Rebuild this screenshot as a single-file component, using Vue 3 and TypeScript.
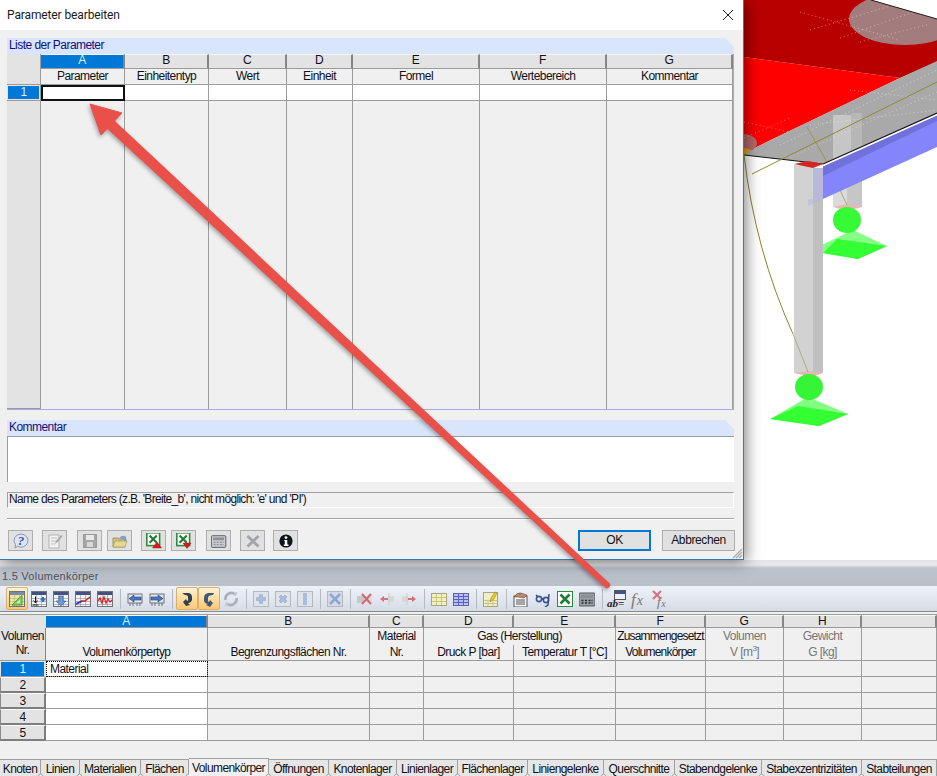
<script setup lang="ts">
// column letters and titles of the parameter dialog
const paramCols = [
  { key: 'A', title: 'Parameter' },
  { key: 'B', title: 'Einheitentyp' },
  { key: 'C', title: 'Wert' },
  { key: 'D', title: 'Einheit' },
  { key: 'E', title: 'Formel' },
  { key: 'F', title: 'Wertebereich' },
  { key: 'G', title: 'Kommentar' }
];

const volumeLetters = ['A', 'B', 'C', 'D', 'E', 'F', 'G', 'H', ''];
const volumeRows = [1, 2, 3, 4, 5];
const volumeCols = [0, 1, 2, 3, 4, 5, 6, 7, 8];

const tabs = [
  { label: 'Knoten', w: 41 },
  { label: 'Linien', w: 39 },
  { label: 'Materialien', w: 61 },
  { label: 'Flächen', w: 48 },
  { label: 'Volumenkörper', w: 80, active: true },
  { label: 'Öffnungen', w: 60 },
  { label: 'Knotenlager', w: 68 },
  { label: 'Linienlager', w: 61 },
  { label: 'Flächenlager', w: 70 },
  { label: 'Liniengelenke', w: 76 },
  { label: 'Querschnitte', w: 71 },
  { label: 'Stabendgelenke', w: 87 },
  { label: 'Stabexzentrizitäten', w: 100 },
  { label: 'Stabteilungen', w: 75 }
];

// small pieces the toolbar icons are made of
const sheet = (fill = '#f2f3f6', head = '#44527f', line = '#8b8f99') =>
  `<rect x="0.5" y="0.5" width="15" height="15" fill="${fill}" stroke="#6f7278"/>` +
  `<rect x="1" y="1" width="14" height="3" fill="${head}"/>` +
  `<path d="M1 7.5h14M1 10.5h14M1 13.5h14M5.5 4v11M10.5 4v11" stroke="${line}" stroke-width="0.6" fill="none"/>`;

const chip = (d: string) =>
  `<rect x="1" y="3" width="14" height="9" fill="#e4e6ea" stroke="#6f7278"/>` +
  `<path d="M3 12v3M6 12v3M10 12v3M13 12v3" stroke="#6f7278"/>` +
  `<path d="${d}" fill="#4a76c0" stroke="#27457e" stroke-width="0.6"/>`;

const paleBox = (d: string) =>
  `<rect x="0.5" y="0.5" width="15" height="15" fill="#dfe3ea" stroke="#b4b8c0"/>` +
  `<path d="${d}" fill="#a9bde0" stroke="#8ea3c8" stroke-width="0.5"/>`;

const excel = `<rect x="1" y="1" width="16" height="16" fill="#fff" stroke="#2c8a3c" stroke-width="2"/>` +
  `<path d="M4.5 4.5l9 9M13.5 4.5l-9 9" stroke="#1e7a34" stroke-width="2.6"/>`;

const calc = (body: string, key: string) =>
  `<rect x="1" y="3" width="16" height="13" rx="1" fill="${body}" stroke="#55585e"/>` +
  `<rect x="3" y="5" width="12" height="3" fill="#8c9096"/>` +
  `<path d="M3.5 10.5h2M7 10.5h2M10.5 10.5h2M13.5 10.5h1M3.5 13h2M7 13h2M10.5 13h2M13.5 13h1" stroke="${key}" stroke-width="1.3"/>`;

interface ToolItem {
  sep?: boolean;
  on?: boolean;
  art?: string;
  fx?: boolean;
  cross?: boolean;
  ab?: boolean;
}

const sep: ToolItem = { sep: true };

const toolbar: ToolItem[] = [
  { on: true, art: sheet('#e9e6a8', '#7c8aa8', '#b8b46a') + '<path d="M3 14L13 4.5V14z" fill="#8ed06a" stroke="#3f9a3a"/><path d="M7.5 12L11 8.8V12z" fill="#e9e6a8"/>' },
  { art: sheet() + '<path d="M4.5 5.5v6M2.5 9.5l2 2.5 2-2.5M1.5 14h6" stroke="#1c1c1c" fill="none"/><path d="M9.5 8.5h5M12 6v5" stroke="#3c6cc0" stroke-width="2"/>' },
  { art: sheet() + '<path d="M6 5h4v5h3l-5 5-5-5h3z" fill="#6f9ad8" stroke="#30558f" stroke-width="0.6"/>' },
  { art: sheet() + '<path d="M1 13l6-3h3l5-4" stroke="#d82020" stroke-width="1.5" fill="none"/><path d="M1 13l6-3" stroke="#2a3cc8" stroke-width="1.6"/>' },
  { art: sheet() + '<path d="M1 10l2-3 2 5 2-6 2 6 2-4 2 3 2-2" stroke="#e02020" stroke-width="1.3" fill="none"/>' },
  sep,
  { art: chip('M2 7.5L7 4v2h7v3H7v2z') },
  { art: chip('M14 7.5L9 4v2H2v3h7v2z') },
  sep,
  { on: true, art: '<path d="M3 2h7q3 1 3 4v3q-1 3-4 3l2 2-4 1-3-4 3-3 1 2q2-1 1-2V6Q9 4 6 4z" fill="#30404f"/>' },
  { on: true, art: '<path d="M13 2H7Q3 3 3 7v3q1 3 4 3l-2 1 4 2 3-4-3-3-1 2q-2-1-1-2V7q0-3 5-3z" fill="#3f5a78"/>' },
  { art: '<path d="M2.5 9A6 6 0 0 1 12 3.2" fill="none" stroke="#aab0ba" stroke-width="2.6"/><path d="M13.5 7A6 6 0 0 1 4 12.8" fill="none" stroke="#aab0ba" stroke-width="2.6"/><path d="M10 0.5l4.5 1-2 4zM6 15.5l-4.5-1 2-4z" fill="#c3c8d0"/>' },
  sep,
  { art: paleBox('M6.5 3.5h3v3h3v3h-3v3h-3v-3h-3v-3h3z') },
  { art: paleBox('M4 6l2-2 2 2 2-2 2 2-2 2 2 2-2 2-2-2-2 2-2-2 2-2z') },
  { art: paleBox('M6.5 2.5h3v3h-3zM6.5 6.5h3v3h-3zM6.5 10.5h3v3h-3z') },
  sep,
  { art: '<rect x="0.5" y="0.5" width="15" height="15" fill="#d6dae2" stroke="#b4b8c0"/><path d="M3 3l10 10M13 3L3 13" stroke="#8ea6d8" stroke-width="2.6"/>' },
  sep,
  { art: '<path d="M0 5h7v7H0z" fill="#c8c8c8"/><path d="M9 5h6v7H9z" fill="#dcdcdc"/><path d="M5 3l9 10M14 3L5 13" stroke="#d06a70" stroke-width="2"/>' },
  { art: '<path d="M9 5h6v6H9z" fill="#d8d8d8"/><path d="M1 8l4-3v2h4v2H5v2z" fill="#d87078"/><path d="M10 2v12" stroke="#ccc"/>' },
  { art: '<path d="M1 5h6v6H1z" fill="#d8d8d8"/><path d="M15 8l-4-3v2H7v2h4v2z" fill="#d87078"/><path d="M6 2v12" stroke="#ccc"/>' },
  sep,
  { art: '<rect x="0.5" y="2.5" width="15" height="12" fill="#f3efbe" stroke="#a7a680"/><path d="M1 6.5h14M1 10.5h14M5.5 3v11M10.5 3v11" stroke="#c9c684" fill="none"/>' },
  { art: '<rect x="0.5" y="2.5" width="15" height="12" fill="#b9bff0" stroke="#6065a8"/><path d="M1 5.5h14M1 8.5h14M1 11.5h14M5.5 3v11M10.5 3v11" stroke="#5a5fc0" fill="none"/>' },
  sep,
  { art: '<rect x="0.5" y="1.5" width="14" height="14" fill="#f0eec8" stroke="#a7a680"/><path d="M1 9.5h13M1 12.5h13M5 9v6M10 9v6" stroke="#c9c684"/><path d="M7 11l1-4 4-6 2 1-3 6z" fill="#e8c820" stroke="#8a7a20" stroke-width="0.5"/>' },
  sep,
  { art: '<rect x="1" y="5" width="13" height="11" fill="#f4f4f4" stroke="#555"/><path d="M3 9h9M3 11h9M3 13h9" stroke="#555"/><path d="M1 6q3-5 7-4l6 2-3 3-6-1z" fill="#b98a6a" stroke="#5a4030" stroke-width="0.5"/>' },
  { art: '<circle cx="4" cy="8" r="2.6" fill="none" stroke="#3c5a98" stroke-width="1.6"/><circle cx="11" cy="9" r="2.6" fill="none" stroke="#3c5a98" stroke-width="1.6"/><path d="M1 4l2 2M6 8l3 0M14 3l-1 11-3 2" stroke="#2d4a82" stroke-width="1.4" fill="none"/>' },
  { art: '<g transform="translate(-1 -1)">' + excel + '</g>' },
  { art: '<g transform="translate(-1 -1)">' + calc('#9a9da3', '#2b2d30') + '</g>' },
  sep,
  { ab: true },
  { fx: true },
  { fx: true, cross: true }
];

const dialogTools = [
  { gap: 0, art: '<path d="M8 1a7 6.6 0 1 1-3.6 12.3L2 15l.6-3.2A7 6.6 0 0 1 8 1z" fill="#dfe4f2" stroke="#8a93b8"/><text x="8" y="12" class="help">?</text>' },
  { gap: 9, art: '<rect x="2" y="2" width="10" height="13" fill="#f2f2f2" stroke="#b2b2b2"/><path d="M4 5h6M4 8h6M4 11h4" stroke="#bcbcbc"/><path d="M8 11l1-3 5-6 1.6 1-5 6z" fill="#a8a8a8"/>' },
  { gap: 10, art: '<rect x="1.5" y="1.5" width="13" height="13" fill="#a6a6a6" stroke="#9a9a9a"/><rect x="4" y="2" width="8" height="5" fill="#e8e8e8"/><rect x="5" y="9" width="6" height="5" fill="#d8d8d8"/>' },
  { gap: 5, art: '<path d="M1 5h5l1 1h6v8H1z" fill="#cfc27c" stroke="#a09660"/><path d="M7 5q4-4 7-1l1 6-2-1q0-3-6-4z" fill="#7f9bd0"/><path d="M1 14l2-6h12l-2 6z" fill="#e4d98e" stroke="#a09660" stroke-width="0.6"/>' },
  { gap: 9, art: '<g transform="translate(0 -1) scale(0.8)">' + excel + '</g><path d="M11 9l4.5 6h-9z" fill="#e01818" stroke="#8a1010" stroke-width="0.4"/>' },
  { gap: 5, art: '<g transform="translate(0 -1) scale(0.8)">' + excel + '</g><path d="M7 10h8l-4 5.5z" fill="#e01818" stroke="#8a1010" stroke-width="0.4"/>' },
  { gap: 10, art: '<g transform="translate(-0.5 0) scale(0.9)">' + calc('#c8cacd', '#8c8f94') + '</g>' },
  { gap: 9, art: '<path d="M2.5 3l11 10.5M13.5 3L2.5 13.5" stroke="#a2a6aa" stroke-width="3"/>' },
  { gap: 8, art: '<circle cx="8" cy="8" r="6.6" fill="#11131c"/><circle cx="8" cy="4.6" r="1.4" fill="#fff"/><path d="M6.3 7h3v4.6h1.2V13H5.8v-1.4h1V8.2h-.5z" fill="#fff"/>' }
];
</script>

<template>
  <div class="app">
    <div class="top">
      <section class="dialog">
        <header class="titlebar">
          <span>Parameter bearbeiten</span>
          <svg class="close" width="10" height="10" viewBox="0 0 10 10">
            <path d="M0 0l10 10M10 0L0 10" stroke="#1b1b1b" stroke-width="1" />
          </svg>
        </header>

        <div class="dlg-body">
          <h3 class="caption">Liste der Parameter</h3>
          <div class="param-grid">
            <div class="corner"></div>
            <div v-for="(c, i) in paramCols" :key="c.key" class="letter" :class="{ picked: i === 0 }">{{ c.key }}</div>
            <div class="side"></div>
            <div v-for="c in paramCols" :key="c.title" class="name">{{ c.title }}</div>
            <div class="rownum picked">1</div>
            <div v-for="(c, i) in paramCols" :key="c.key + 'r'" class="entry" :class="{ current: i === 0 }"></div>
            <div class="side"></div>
            <div v-for="c in paramCols" :key="c.key + 'f'" class="filler"></div>
          </div>

          <h3 class="caption second">Kommentar</h3>
          <div class="comment"></div>

          <div class="status">Name des Parameters (z.B. 'Breite_b', nicht möglich: 'e' und 'PI')</div>
          <div class="rule"></div>

          <div class="actions">
            <button
              v-for="(t, i) in dialogTools"
              :key="i"
              class="iconbtn"
              :style="{ marginLeft: t.gap + 'px' }"
            >
              <svg width="16" height="16" viewBox="0 0 16 16" v-html="t.art"></svg>
            </button>
            <div class="grow"></div>
            <button class="btn default">OK</button>
            <button class="btn">Abbrechen</button>
          </div>
        </div>

        <svg class="grip" width="11" height="11" viewBox="0 0 11 11">
          <path d="M10 1L1 10M10 4L4 10M10 7L7 10" stroke="#a8a8a8" stroke-width="1.2" />
        </svg>
      </section>

      <svg class="scene" width="193" height="560" viewBox="744 0 193 560">
        <defs>
          <clipPath id="slab-top">
            <path d="M744 0H871L937 19V62L900 78L744 57Z" />
          </clipPath>
        </defs>
        <path d="M744 0H871L937 19V62L900 78L744 57Z" fill="#b90000" />
        <ellipse cx="905" cy="19" rx="56" ry="26" fill="#a37d7d" clip-path="url(#slab-top)" />
        <path d="M744 57L900 78L744 153Z" fill="#ff0000" />
        <path d="M744 153L900 78L937 61V113L823 164L744 155Z" fill="#a9a9a9" />
        <ellipse cx="744" cy="143" rx="13" ry="9" fill="#b56868" />
        <path d="M744 155L752 150L744 148Z" fill="#e2a11e" />
        <path d="M833 115H851V158L833 160Z" fill="#c6c6c6" />
        <path d="M851 113H862V153L851 158Z" fill="#b7b7b7" />
        <g stroke="#fff" stroke-opacity="0.45" stroke-dasharray="1 3" fill="none">
          <path d="M800 12L900 40M810 30L890 6M840 38L930 6M860 42L930 24" />
          <path d="M744 122L790 132M744 138L790 118M780 145L937 70M790 157L937 92" />
          <path d="M810 125L937 110M850 90L937 100" />
        </g>
        <path d="M744 155L823 164" stroke="#111" stroke-width="1" />
        <path d="M871 0L937 19" stroke="#222" stroke-width="1" />
        <path d="M752 174L937 82" stroke="#8d8d2c" stroke-width="1" />
        <path d="M807 127L828 164" stroke="#8d8d2c" stroke-width="1" opacity="0.7" />

        <!-- back column and support -->
        <path d="M833 160H847V207H833Z" fill="#dadada" />
        <path d="M847 156H862V207H847Z" fill="#c6c6c6" />
        <path d="M833 207L847 204L862 207L847 211Z" fill="#ecb5b5" />
        <path d="M809 251L853 230L887 246L858 259Z" fill="#85ff85" />
        <path d="M823 253L837 239L887 246L858 259Z" fill="#33ff33" />
        <ellipse cx="847" cy="220" rx="14" ry="13" fill="#36fa36" />
        <path d="M828 164L847 205" stroke="#8d8d2c" stroke-width="1" opacity="0.6" />

        <!-- beam -->
        <path d="M823 166L937 115V147L823 199Z" fill="#8585fb" />
        <path d="M823 166L937 115V121L823 176Z" fill="#7171dc" />
        <path d="M823 164L937 113" stroke="#fff" stroke-width="2.4" transform="translate(0 1.2)" />
        <path d="M823 164L937 113" stroke="#111" stroke-width="1.2" />

        <!-- front column and support -->
        <path d="M794 165H813V373H794Z" fill="#d2d2d2" />
        <path d="M813 168H823V373H813Z" fill="#c0c0c0" />
        <path d="M813 168H823V199H813Z" fill="#b8b8d8" />
        <path d="M808 199H823L808 206Z" fill="#b4b4e6" opacity="0.5" />
        <path d="M794 164L808 161L823 164L813 168Z" fill="#d52424" />
        <path d="M794 373L808 371L823 373L812 377Z" fill="#e9b4b4" />
        <path d="M770 419L808 397L848 414L819 426Z" fill="#80ff80" />
        <path d="M770 419L798 406L848 414L819 426Z" fill="#33ff33" />
        <ellipse cx="809" cy="387" rx="14" ry="13" fill="#36f536" />
        <path d="M744 155Q755 250 793 334" stroke="#86862a" stroke-width="1" fill="none" />
        <path d="M793 334L808 372" stroke="#86862a" stroke-width="1" opacity="0.5" />
      </svg>
    </div>

    <div class="panel">
      <div class="panel-title">1.5 Volumenkörper</div>
      <div class="toolbar">
        <template v-for="(t, i) in toolbar" :key="i">
          <span v-if="t.sep" class="tsep"></span>
          <span v-else-if="t.ab" class="tool">
            <svg width="22" height="22" viewBox="0 0 22 22">
              <rect x="8.5" y="2.5" width="11" height="9" fill="#eef1f6" stroke="#555" />
              <rect x="9" y="3" width="10" height="3" fill="#3f5680" />
              <text x="1" y="19" class="ab">ab=</text>
            </svg>
          </span>
          <span v-else-if="t.fx" class="tool">
            <svg width="22" height="22" viewBox="0 0 22 22">
              <template v-if="t.cross">
                <text x="7" y="18" class="fx small">f<tspan dx="0.5" dy="1" font-size="10">x</tspan></text>
                <path d="M3 3l8 8M11 3l-8 8" stroke="#d8707c" stroke-width="2" />
              </template>
              <text v-else x="3" y="17" class="fx">f<tspan dx="1" font-size="14">x</tspan></text>
            </svg>
          </span>
          <span v-else class="tool" :class="{ on: t.on }">
            <svg width="16" height="16" viewBox="0 0 16 16" v-html="t.art"></svg>
          </span>
        </template>
      </div>

      <div class="volume-grid">
        <div class="corner-v"></div>
        <div v-for="(l, i) in volumeLetters" :key="'l' + i" class="letter" :class="{ picked: i === 0 }">{{ l }}</div>

        <div class="vhead vnum">Volumen<br />Nr.</div>
        <div class="vhead bottom">Volumenkörpertyp</div>
        <div class="vhead bottom">Begrenzungsflächen Nr.</div>
        <div class="vhead">Material<br />Nr.</div>
        <div class="vhead gas">Gas (Herstellung)</div>
        <div class="vhead tight">Zusammengesetzt<br />Volumenkörper</div>
        <div class="vhead muted">Volumen<br />V [m<sup>3</sup>]</div>
        <div class="vhead muted">Gewicht<br />G [kg]</div>
        <div class="vhead"></div>
        <div class="vsub split">Druck P [bar]</div>
        <div class="vsub">Temperatur T [°C]</div>

        <template v-for="r in volumeRows" :key="r">
          <div class="vrow" :class="{ picked: r === 1 }">{{ r }}</div>
          <div
            v-for="c in volumeCols"
            :key="c"
            class="vcell"
            :class="{ white: c === 0, current: c === 0 && r === 1 }"
          >
            <template v-if="c === 0 && r === 1">Material</template>
          </div>
        </template>
      </div>

      <div class="grow"></div>
      <nav class="tabs">
        <span
          v-for="t in tabs"
          :key="t.label"
          class="tab"
          :class="{ active: t.active }"
          :style="{ width: t.w + 'px' }"
        >{{ t.label }}</span>
      </nav>
    </div>

    <svg class="arrow" width="937" height="776" viewBox="0 0 937 776">
      <path d="M111.7 118L610 583.8A3.4 3.4 0 0 1 606 588.2L104.3 126Z" fill="#ea504a" />
      <path d="M90 104L122 113L101 135Z" fill="#ea504a" stroke="#ea504a" stroke-linejoin="round" />
    </svg>
  </div>
</template>

<style>
html,
body {
  margin: 0;
  background: #fff;
}
</style>

<style scoped>
.app {
  position: relative;
  width: 937px;
  height: 776px;
  overflow: hidden;
  display: flex;
  flex-direction: column;
  font-family: "Liberation Sans", Arial, sans-serif;
  font-size: 12px;
  letter-spacing: -0.55px;
  color: #101018;
}

.top {
  display: flex;
  height: 560px;
  flex: none;
}

/* dialog window */
.dialog {
  position: relative;
  z-index: 2;
  box-sizing: border-box;
  width: 744px;
  height: 560px;
  flex: none;
  display: flex;
  flex-direction: column;
  background: #f0f0f0;
  border-right: 1px solid #2f7cb8;
  border-bottom: 1px solid #2f7cb8;
  box-shadow: 2px 2px 14px rgba(0, 0, 0, 0.5);
}

.titlebar {
  height: 29px;
  flex: none;
  background: #fff;
  display: flex;
  align-items: center;
  justify-content: space-between;
  padding: 0 10px 1px 7px;
  font-family: Roboto, sans-serif;
  font-size: 12px;
  letter-spacing: -0.12px;
  color: #1a1a1a;
}

.dlg-body {
  flex: 1;
  display: flex;
  flex-direction: column;
  padding: 8px 9px 0 7px;
}

.caption {
  height: 16px;
  margin: 0;
  padding-left: 2px;
  background: #d9e5fb;
  color: #10107a;
  font-size: 12px;
  font-weight: normal;
  line-height: 15px;
  clip-path: polygon(0 0, calc(100% - 9px) 0, 100% 9px, 100% 100%, 0 100%);
}

.caption.second {
  margin-top: 10px;
}

.param-grid {
  display: grid;
  grid-template-columns: 34px 84px 84px 78px 66px 127px 127px 126px;
  grid-template-rows: 15px 16px 16px 1fr;
  height: 356px;
  box-sizing: border-box;
  border-bottom: 1px solid #a3a9ec;
  border-right: 1px solid #a3a9ec;
  text-align: center;
}

.corner,
.corner-v,
.side {
  background: #e3e3e3;
  border-right: 1px solid #9c9c9c;
}

.side {
  border-bottom: 1px solid #9c9c9c;
}

.letter {
  box-sizing: border-box;
  background: #e3e3e3;
  border-top: 1px solid #f6f6f6;
  border-right: 2px solid #868686;
  border-bottom: 1px solid #9a9a9a;
  line-height: 11px;
  font-size: 12px;
}

.picked {
  background: #0078d7;
  color: #d8ecff;
}

.name,
.entry,
.filler,
.rownum {
  box-sizing: border-box;
  border-right: 1px solid #9c9c9c;
  border-bottom: 1px solid #9c9c9c;
}

.name {
  line-height: 14px;
}

.entry {
  background: #fff;
}

.entry.current {
  border: 2px solid #101010;
}

.rownum {
  line-height: 14px;
  font-size: 12px;
  box-shadow: inset 0 0 0 1px #e3e3e3;
}

.filler {
  border-bottom: none;
}

.comment {
  height: 46px;
  box-sizing: border-box;
  background: #fff;
  border-top: 1px solid #9c9c9c;
  border-left: 1px solid #9c9c9c;
}

.status {
  height: 16px;
  margin-top: 10px;
  box-sizing: border-box;
  border-top: 1px solid #a0a0a0;
  border-left: 1px solid #a0a0a0;
  border-right: 1px solid #fff;
  border-bottom: 1px solid #fff;
  line-height: 13px;
  letter-spacing: -0.68px;
  padding-left: 1px;
  white-space: nowrap;
}

.rule {
  margin-top: 10px;
  height: 1px;
  background: #a4a4a4;
  border-bottom: 1px solid #fff;
}

.actions {
  display: flex;
  margin: 10px -1px 0 1px;
  height: 21px;
}

.iconbtn {
  box-sizing: border-box;
  width: 25px;
  height: 21px;
  padding: 0;
  display: flex;
  align-items: center;
  justify-content: center;
  background: #e1e1e1;
  border: 1px solid #adadad;
}

.grow {
  flex: 1;
}

.btn {
  box-sizing: border-box;
  width: 73px;
  height: 21px;
  margin-left: 11px;
  padding: 0 0 2px;
  background: #e1e1e1;
  border: 1px solid #adadad;
  font-family: "Liberation Sans", Arial, sans-serif;
  font-size: 12px;
  letter-spacing: -0.4px;
  color: #111;
}

.btn.default {
  border: 2px solid #0078d7;
}

.grip {
  position: absolute;
  right: 0;
  bottom: 0;
}

.scene {
  display: block;
}

/* lower table panel */
.panel {
  flex: 1;
  display: flex;
  flex-direction: column;
  background: #f0f0f0;
}

.panel-title {
  height: 26px;
  box-sizing: border-box;
  padding: 9px 0 0 2px;
  background: linear-gradient(#e3e4e6 0, #e8e9eb 5px, #bcc3cd 8px, #b9c0ca 100%);
  color: #4e525a;
  font-size: 11px;
  line-height: 15px;
  letter-spacing: 0.25px;
}

.toolbar {
  height: 26px;
  box-sizing: border-box;
  flex: none;
  display: flex;
  align-items: center;
  padding-left: 6px;
  background: linear-gradient(#eef2fa, #d6dce6);
  border-bottom: 1px solid #85888c;
}

.tool {
  width: 22px;
  height: 23px;
  box-sizing: border-box;
  display: flex;
  align-items: center;
  justify-content: center;
}

.tool.on {
  border: 1px solid #dcae6c;
  border-radius: 2px;
  background: linear-gradient(#fff3d2, #ffc872);
}

.tsep {
  width: 8px;
  height: 20px;
  background: linear-gradient(#b5b9c0, #b5b9c0) center / 1px 100% no-repeat;
}

.ab {
  font-family: "Liberation Serif", serif;
  font-size: 11px;
  font-style: italic;
  font-weight: bold;
  letter-spacing: 0;
  fill: #1c1c1c;
}

.fx {
  font-family: "Liberation Serif", serif;
  font-size: 17px;
  font-style: italic;
  letter-spacing: 0;
  fill: #777;
}

.fx.small {
  font-size: 13px;
}

:deep(.help) {
  font-family: "Liberation Serif", serif;
  font-size: 13px;
  font-weight: bold;
  font-style: italic;
  text-anchor: middle;
  fill: #3556a8;
}

.volume-grid {
  display: grid;
  grid-template-columns: 46px 162px 162px 54px 90px 102px 90px 78px 78px 1fr;
  grid-template-rows: 13px 17px 16px repeat(5, 16px);
  text-align: center;
  border-top: 1px solid #9c9c9c;
  margin-top: 2px;
}

.corner-v {
  border-right: none;
}

.vhead,
.vsub {
  box-sizing: border-box;
  grid-row: span 2;
  border-right: 1px solid #9c9c9c;
  border-bottom: 1px solid #9c9c9c;
  line-height: 16px;
  white-space: nowrap;
}

.vhead.bottom {
  display: flex;
  align-items: flex-end;
  justify-content: center;
}

.vnum {
  background: #e3e3e3;
  line-height: 14px;
  padding-top: 1px;
  border-right: 1px solid #868686;
}

.gas {
  grid-column: span 2;
  grid-row: span 1;
  border-bottom: none;
}

.vsub {
  grid-row: 3;
  line-height: 14px;
}

.vsub.split {
  grid-column: 5;
}

.vsub:not(.split) {
  grid-column: 6;
}

.tight {
  letter-spacing: -0.8px;
}

.muted {
  color: #777;
}

sup {
  font-size: 8px;
  line-height: 0;
}

.vrow {
  box-sizing: border-box;
  background: #e3e3e3;
  border-top: 1px solid #fafafa;
  border-left: 1px solid #8a8a8a;
  border-right: 2px solid #7e7e7e;
  border-bottom: 2px solid #7e7e7e;
  line-height: 15px;
  font-size: 12px;
}

.vrow.picked {
  background: #0078d7;
  border-color: #e3e3e3;
  border-bottom: 1px solid #9c9c9c;
}

.vcell {
  box-sizing: border-box;
  border-right: 1px solid #9c9c9c;
  border-bottom: 1px solid #9c9c9c;
  text-align: left;
  padding-left: 4px;
  line-height: 17px;
}

.vcell.white {
  background: #fff;
}

.vcell.current {
  outline: 1px dotted #111;
  outline-offset: -1px;
}

.tabs {
  display: flex;
  height: 17px;
  flex: none;
  background: #e6e6e6;
  border-top: 1px solid #a0a0a0;
  box-sizing: border-box;
}

.tab {
  position: relative;
  flex: none;
  box-sizing: border-box;
  padding-top: 2px;
  text-align: center;
  letter-spacing: -0.6px;
  line-height: 15px;
  white-space: nowrap;
  border-right: 1px solid #a0a0a0;
}

.tab::after {
  content: "";
  position: absolute;
  right: -3px;
  bottom: -3px;
  width: 4px;
  height: 4px;
  background: #fff;
  border-left: 1px solid #a0a0a0;
  border-top: 1px solid #a0a0a0;
  transform: rotate(45deg);
}

.tab:last-child::after {
  display: none;
}

.tab.active {
  background: #f0f0f0;
  margin-top: -2px;
  height: 18px;
  border-top: 1px solid #a0a0a0;
}

/* the red annotation arrow lies over everything */
.arrow {
  position: absolute;
  left: 0;
  top: 0;
  z-index: 5;
  pointer-events: none;
  filter: drop-shadow(-1px 2px 2px rgba(0, 0, 0, 0.35));
}
</style>
